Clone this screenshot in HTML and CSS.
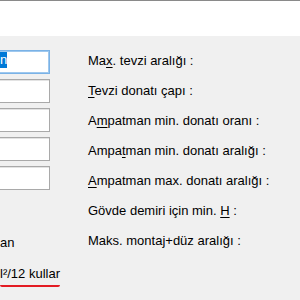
FILE: index.html
```html
<!DOCTYPE html>
<html lang="tr">
<head>
    <meta charset="UTF-8">
    <title>Donatı ayarları</title>
    <link rel="stylesheet" href="styles.css">
</head>
<body>
    <div class="topbar"></div>
    <div class="panel">
        <div class="left">
            <div class="field focus"><span class="sel">n</span></div>
            <div class="field"></div>
            <div class="field"></div>
            <div class="field"></div>
            <div class="field"></div>
            <div class="note first">an</div>
            <div class="note"><span class="mark">l²/12 kullar</span></div>
        </div>
        <div class="right">
            <div class="label">Ma<u>x</u>. tevzi aralığı :</div>
            <div class="label"><u>T</u>evzi donatı çapı :</div>
            <div class="label">A<u>m</u>patman min. donatı oranı :</div>
            <div class="label">Ampa<u>t</u>man min. donatı aralığı :</div>
            <div class="label"><u>A</u>mpatman max. donatı aralığı :</div>
            <div class="label">Gövde demiri için min. <u>H</u> :</div>
            <div class="label">Maks. montaj+düz aralığı :</div>
        </div>
    </div>
</body>
</html>
```

FILE: styles.css
```css
body { margin: 0; background: #f0f0f0; font-family: "Liberation Sans", Arial, sans-serif; font-size: 13px; color: #000; overflow: hidden; }
.topbar { height: 35px; background: #fff; border-top: 1px solid #8a8a8a; }
.panel { display: flex; gap: 38px; }
.left { width: 50px; flex-shrink: 0; padding-top: 14px; }
.field { box-sizing: border-box; width: 90px; height: 24px; margin-left: -40px; margin-bottom: 5px; background: #fff; border: 1px solid #a9a9a9; box-shadow: inset 1px 1px 0 #e3e3e3; }
.field.focus { border-color: #7ab2e6; box-shadow: inset 0 0 0 1px #9fc8ee; display: flex; align-items: flex-start; padding: 1px 0 0 39px; }
.sel { background: #0078d7; color: #fff; padding: 1px 0 1px; line-height: 14px; }
.note { line-height: 16px; white-space: nowrap; }
.note.first { margin-top: 45px; }
.note + .note { margin-top: 15px; }
.mark { display: inline-block; padding-bottom: 3px; border-bottom: 2px solid #e31b23; border-radius: 0 0 2px 2px; }
.right { padding-top: 10px; }
.label { line-height: 30px; white-space: nowrap; }
u { text-underline-offset: 2px; }
```
